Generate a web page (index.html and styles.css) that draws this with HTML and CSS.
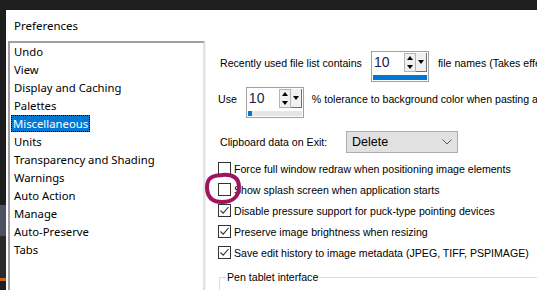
FILE: index.html
```html
<!DOCTYPE html>
<html lang="en">
<head>
    <meta charset="UTF-8">
    <title>Preferences</title>
    <link rel="stylesheet" href="styles.css">
</head>
<body>
<div class="screen">
    <div class="backdrop">
        <div class="bd-dark"></div>
        <div class="bd-gray"></div>
        <div class="bd-mid"></div>
        <div class="bd-orange"></div>
    </div>

    <div class="dialog">
        <div class="title">Preferences</div>

        <div class="content">
            <ul class="pages">
                <li>Undo</li>
                <li>View</li>
                <li>Display and Caching</li>
                <li>Palettes</li>
                <li><span class="selected">Miscellaneous</span></li>
                <li>Units</li>
                <li>Transparency and Shading</li>
                <li>Warnings</li>
                <li>Auto Action</li>
                <li>Manage</li>
                <li>Auto-Preserve</li>
                <li>Tabs</li>
            </ul>

            <div class="panel">
                <div class="row row-files">
                    <span class="label">Recently used file list contains</span>
                    <div class="spin">
                        <div class="spin-top">
                            <span class="spin-value">10</span>
                            <span class="spin-arrows">
                                <span class="arr up"></span>
                                <span class="arr down"></span>
                            </span>
                            <span class="spin-drop"><span class="arr down"></span></span>
                        </div>
                        <div class="spin-track"><div class="spin-fill" style="width:100%"></div></div>
                    </div>
                    <span class="label">file names (Takes effect after restarting)</span>
                </div>

                <div class="row row-tol">
                    <span class="label">Use</span>
                    <div class="spin">
                        <div class="spin-top">
                            <span class="spin-value">10</span>
                            <span class="spin-arrows">
                                <span class="arr up"></span>
                                <span class="arr down"></span>
                            </span>
                            <span class="spin-drop"><span class="arr down"></span></span>
                        </div>
                        <div class="spin-track"><div class="spin-fill" style="width:8%"></div></div>
                    </div>
                    <span class="label">% tolerance to background color when pasting a transparent selection</span>
                </div>

                <div class="row row-clip">
                    <span class="label">Clipboard data on Exit:</span>
                    <div class="select">
                        <span>Delete</span>
                        <svg class="chev" width="10" height="6" viewBox="0 0 10 6"><path d="M0.5 0.5 L5 5 L9.5 0.5" fill="none" stroke="#555" stroke-width="1"/></svg>
                    </div>
                </div>

                <div class="checks">
                    <label class="check"><span class="box"></span>Force full window redraw when positioning image elements</label>
                    <label class="check"><span class="box"></span>Show splash screen when application starts</label>
                    <label class="check"><span class="box on"><svg width="11" height="11" viewBox="0 0 11 11"><path d="M1.5 5.5 L4.2 8.2 L9.5 2" fill="none" stroke="#333" stroke-width="1.1"/></svg></span>Disable pressure support for puck-type pointing devices</label>
                    <label class="check"><span class="box on"><svg width="11" height="11" viewBox="0 0 11 11"><path d="M1.5 5.5 L4.2 8.2 L9.5 2" fill="none" stroke="#333" stroke-width="1.1"/></svg></span>Preserve image brightness when resizing</label>
                    <label class="check"><span class="box on"><svg width="11" height="11" viewBox="0 0 11 11"><path d="M1.5 5.5 L4.2 8.2 L9.5 2" fill="none" stroke="#333" stroke-width="1.1"/></svg></span>Save edit history to image metadata (JPEG, TIFF, PSPIMAGE)</label>
                </div>

                <fieldset class="group">
                    <legend>Pen tablet interface</legend>
                </fieldset>
            </div>
        </div>
    </div>

    <!-- hand drawn mark around the splash screen option -->
    <svg class="mark" width="40" height="36" viewBox="204 170 40 36">
        <path d="M222 175 C233 174 239 178 239 187 C239 197 232 202 222 202 C212 202 207 197 207 187 C207 178 212 175 224 175" fill="none" stroke="#a0145f" stroke-width="4" stroke-linecap="round"/>
    </svg>
</div>
</body>
</html>
```

FILE: styles.css
```css
html, body {
    margin: 0;
    padding: 0;
}

body {
    background: #1e1e1e;
    width: 537px;
    height: 290px;
    overflow: hidden;
}

.screen {
    position: relative;
    display: flex;
    height: 290px;
    overflow: hidden;
}

.backdrop {
    width: 6px;
    display: flex;
    flex-direction: column;
    flex-shrink: 0;
}

.bd-dark {
    height: 205px;
    background: #1e1e1e;
}

.bd-gray {
    height: 31px;
    background: #4d5260;
}

.bd-mid {
    height: 42px;
    background: #2a2a2a;
}

.bd-orange {
    height: 3px;
    background: #c8601e;
}

.dialog {
    flex: 1;
    min-width: 0;
    margin-top: 10px;
    background: #fff;
    display: flex;
    flex-direction: column;
    font-family: "Liberation Sans", Arial, sans-serif;
    color: #000;
}

.title {
    height: 31px;
    line-height: 31px;
    padding-left: 8px;
    font-family: "Noto Sans", sans-serif;
    font-size: 11.5px;
}

.content {
    flex: 1;
    min-height: 0;
    display: flex;
}

.pages {
    list-style: none;
    margin: 0 0 0 2px;
    padding: 0;
    width: 193px;
    flex-shrink: 0;
    border-top: 2px solid #a0a0a0;
    border-left: 2px solid #a0a0a0;
    border-right: 2px solid #e3e3e3;
    font-family: "Noto Sans", sans-serif;
    font-size: 11.3px;
}

.pages li {
    height: 18px;
    line-height: 18px;
    padding-left: 4px;
    white-space: nowrap;
}

.selected {
    display: inline-block;
    margin-left: -3px;
    padding: 0 1px;
    line-height: 15px;
    background: #0078d7;
    color: #fff;
    border: 1px dotted #000;
}

.panel {
    flex: 1;
    min-width: 0;
    border-left: 1px solid #f0f0f0;
    padding: 10px 0 0 14px;
    overflow: hidden;
    font-size: 10.6px;
}

.row {
    display: flex;
    align-items: flex-start;
    white-space: nowrap;
}

.row-files .label {
    padding-top: 6px;
}

.row-files .label:first-child {
    margin-right: 9px;
}

.row-files .spin {
    margin-right: 9px;
}

.row-tol {
    margin-top: 5px;
    margin-left: -2px;
}

.row-tol .label {
    padding-top: 6px;
}

.row-tol .label:first-child {
    margin-right: 9px;
}

.row-tol .spin {
    margin-right: 8px;
}

.spin {
    width: 54px;
    height: 27px;
    border: 1px solid #a0a0a0;
    padding: 1px;
    box-sizing: content-box;
    display: flex;
    flex-direction: column;
    flex-shrink: 0;
}

.spin-top {
    display: flex;
    height: 19px;
}

.spin-value {
    flex: 1;
    font-size: 14px;
    line-height: 19px;
    padding-left: 1px;
    color: #1a1a50;
}

.spin-arrows {
    width: 10px;
    display: flex;
    flex-direction: column;
    border: 1px solid #b4b4b4;
    background: #f0f0f0;
}

.spin-arrows .arr {
    flex: 1;
}

.spin-drop {
    width: 10px;
    background: #f0f0f0;
    border-right: 1px solid #707070;
    border-bottom: 1px solid #707070;
    display: flex;
    align-items: center;
    justify-content: center;
}

.arr {
    display: flex;
    align-items: center;
    justify-content: center;
}

.arr::before {
    content: "";
    border-left: 3px solid transparent;
    border-right: 3px solid transparent;
}

.arr.up::before {
    border-bottom: 4px solid #000;
}

.arr.down::before {
    border-top: 4px solid #000;
}

.spin-track {
    margin-top: 3px;
    height: 5px;
    background: #e6e6e6;
}

.spin-fill {
    height: 100%;
    background: #0078d7;
}

.row-clip {
    margin-top: 13px;
    align-items: center;
}

.row-clip .label {
    width: 126px;
}

.select {
    width: 100px;
    height: 20px;
    border: 1px solid #adadad;
    background: #e1e1e1;
    display: flex;
    align-items: center;
    justify-content: space-between;
    padding: 0 5px;
    font-size: 12.5px;
}

.checks {
    margin-top: 9px;
    margin-left: -2px;
    display: flex;
    flex-direction: column;
    gap: 8px;
}

.check {
    display: flex;
    align-items: center;
    gap: 3px;
    height: 13px;
    white-space: nowrap;
}

.box {
    width: 11px;
    height: 11px;
    border: 1px solid #333;
    background: #fff;
    display: flex;
    align-items: center;
    justify-content: center;
    flex-shrink: 0;
}

.group {
    margin: 12px 0 0 -1px;
    padding: 0;
    height: 40px;
    border: 1px solid #dcdcdc;
    border-right: none;
}

.group legend {
    margin-left: 6px;
    padding: 0 1px;
    font-size: 10.6px;
}

.mark {
    position: absolute;
    left: 204px;
    top: 170px;
}
```
